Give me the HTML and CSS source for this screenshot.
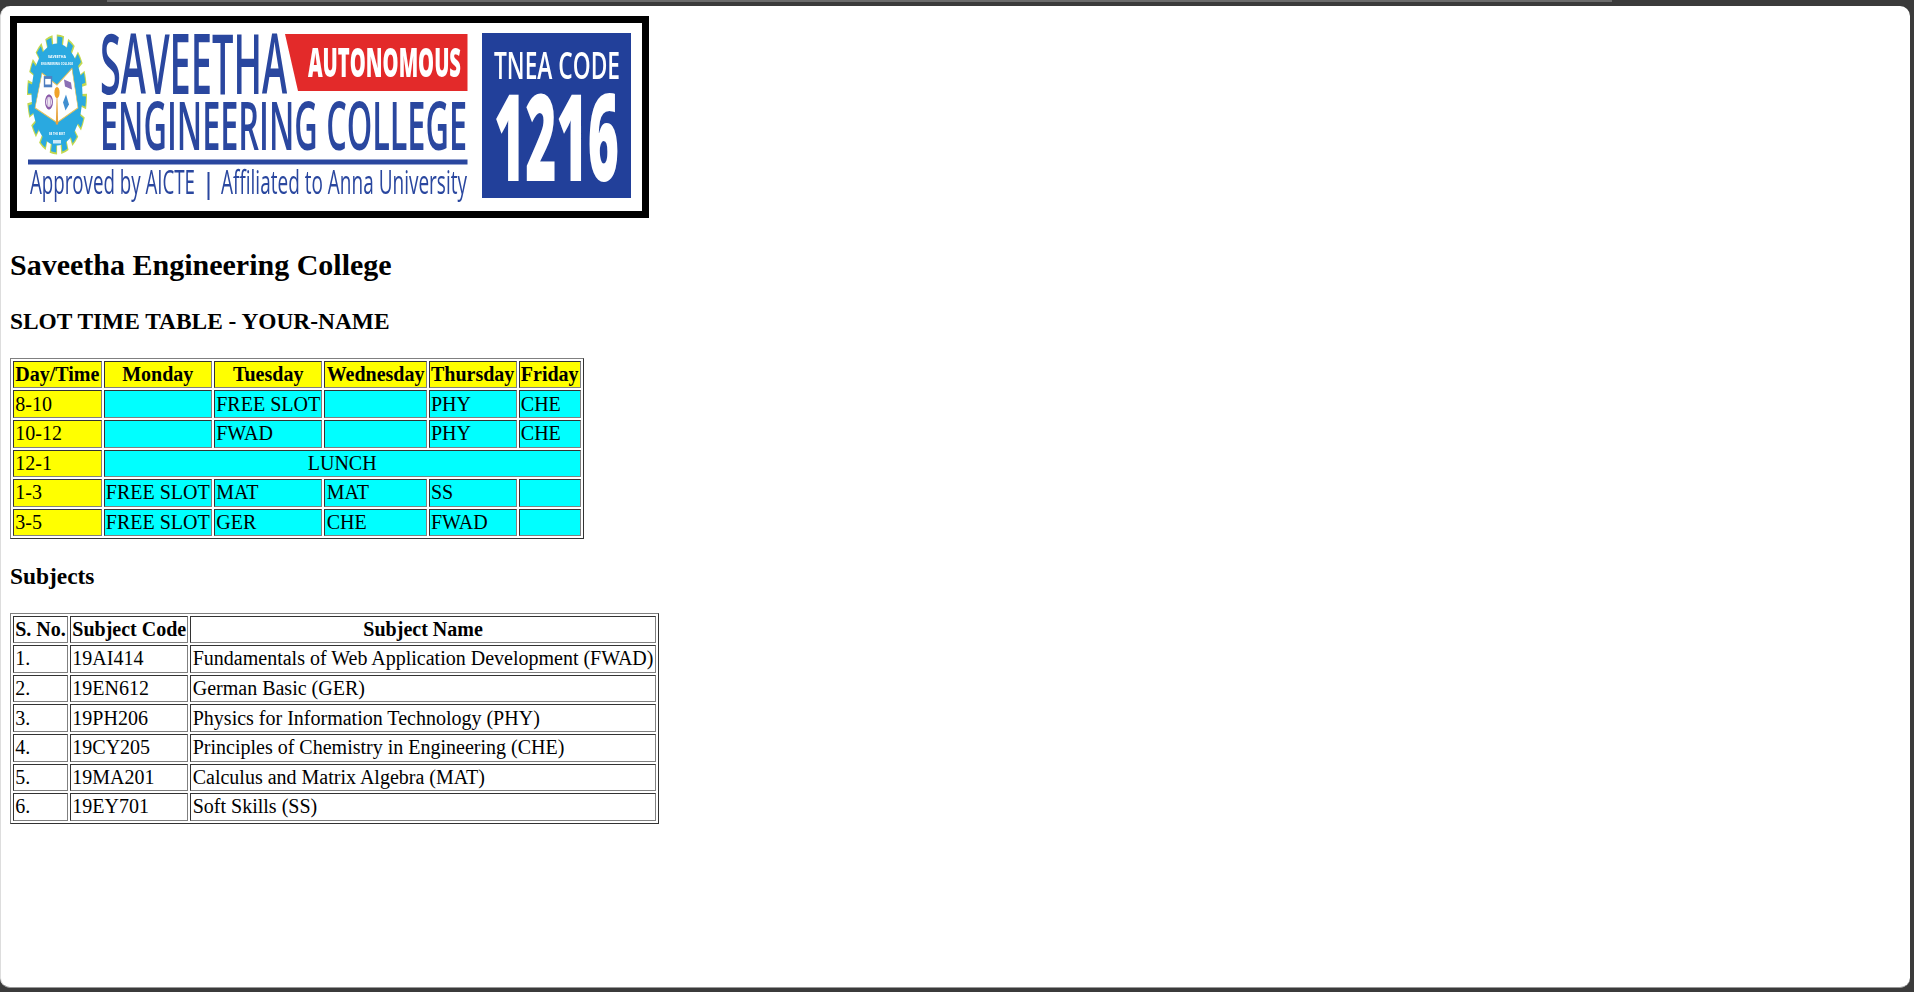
FILE: index.html

```html
<!DOCTYPE html>
<html lang="en">
<head>
  <meta charset="UTF-8">
  <title>Slot Time Table</title>
  <link rel="stylesheet" href="styles.css">
</head>
<body>
  <div class="tab-edge"></div>
  <div class="page">
    <svg class="logo" viewBox="17 23 625 188" preserveAspectRatio="none" role="img" aria-label="Saveetha Engineering College logo">
      <defs>
        <filter id="soft" x="-2%" y="-2%" width="104%" height="104%"><feGaussianBlur stdDeviation="0.5"/></filter>
      </defs>
      <g filter="url(#soft)">
        <!-- gear badge, the whole logo is stretched so it is taller than wide -->
        <g transform="translate(57 94.5) scale(1 2)">
          <circle r="27" pathLength="160" fill="none" stroke="#c3d84f" stroke-width="6" stroke-dasharray="6.4 3.6"/>
          <circle r="26" pathLength="160" fill="none" stroke="#29a9e0" stroke-width="6" stroke-dasharray="4.6 5.4" stroke-dashoffset="-0.9"/>
          <circle r="25.5" fill="#29a9e0"/>
          <path d="M-15 -10.7 L0 -4.7 L15 -13 L21 6.7 L0 14 L-22 6.7 Z" fill="#fff" stroke="#e6c25a" stroke-width=".6"/>
          <rect x="-12.5" y="-8.5" width="7" height="4.2" fill="#fff" stroke="#4f7fc0" stroke-width="1.4"/>
          <ellipse cx="-8" cy="3.7" rx="3.4" ry="3.2" fill="none" stroke="#8a5aa8" stroke-width="1.1"/>
          <ellipse cx="-8" cy="3.7" rx="1.2" ry="3.4" fill="none" stroke="#8a5aa8" stroke-width=".7"/>
          <path d="M7 -7.5 L14 -6 L15 -2.5 L8 -4 Z" fill="#8a6fb5"/>
          <path d="M6 4 L9 0 L12 5 L8.5 8 Z" fill="#3f8fd0"/>
          <path d="M-1.2 15 L0 -5 L1.2 15 Z" fill="#e8a33c"/>
          <ellipse cy="-1" rx="2.6" ry="2.8" fill="#f0a32c"/>
        </g>
        <text class="tiny" x="57" y="57.5" text-anchor="middle" textLength="18" lengthAdjust="spacingAndGlyphs">SAVEETHA</text>
        <text class="tiny" x="57" y="64.5" text-anchor="middle" textLength="32" lengthAdjust="spacingAndGlyphs">ENGINEERING COLLEGE</text>
        <text class="tiny" x="57" y="135" text-anchor="middle" textLength="16" lengthAdjust="spacingAndGlyphs">BE THE BEST</text>
        <rect x="53" y="140" width="8" height="3.5" fill="#cfeaf8"/>

        <polygon points="285,34 467.5,34 467.5,91 298,91" fill="#e32b2b"/>
        <text class="word blue" x="100" y="94" font-size="84" textLength="187" lengthAdjust="spacingAndGlyphs">SAVEETHA</text>
        <text class="word white bold" x="308" y="76.5" font-size="41" textLength="153" lengthAdjust="spacingAndGlyphs">AUTONOMOUS</text>
        <text class="word blue" x="100" y="150" font-size="67" textLength="367" lengthAdjust="spacingAndGlyphs">ENGINEERING COLLEGE</text>
        <rect x="28" y="159.5" width="439.5" height="5" fill="#2a479f"/>
        <text class="word blue thin" x="30" y="194" font-size="33" textLength="165" lengthAdjust="spacingAndGlyphs">Approved by AICTE</text>
        <rect x="207.5" y="172" width="2" height="28" fill="#2a479f"/>
        <text class="word blue thin" x="221" y="194" font-size="33" textLength="246" lengthAdjust="spacingAndGlyphs">Affiliated to Anna University</text>

        <rect x="482" y="33" width="149" height="165" fill="#21409a"/>
        <text class="word white" x="494" y="79" font-size="38" textLength="126" lengthAdjust="spacingAndGlyphs">TNEA CODE</text>
        <text class="word white bold" x="494" y="181" font-size="120" textLength="125" lengthAdjust="spacingAndGlyphs">1216</text>
      </g>
    </svg>

    <h1>Saveetha Engineering College</h1>
    <h2>SLOT TIME TABLE - YOUR-NAME</h2>

    <table class="slots">
      <tr><th>Day/Time</th><th>Monday</th><th>Tuesday</th><th>Wednesday</th><th>Thursday</th><th>Friday</th></tr>
      <tr><td class="time">8-10</td><td></td><td>FREE SLOT</td><td></td><td>PHY</td><td>CHE</td></tr>
      <tr><td class="time">10-12</td><td></td><td>FWAD</td><td></td><td>PHY</td><td>CHE</td></tr>
      <tr><td class="time">12-1</td><td class="lunch" colspan="5">LUNCH</td></tr>
      <tr><td class="time">1-3</td><td>FREE SLOT</td><td>MAT</td><td>MAT</td><td>SS</td><td></td></tr>
      <tr><td class="time">3-5</td><td>FREE SLOT</td><td>GER</td><td>CHE</td><td>FWAD</td><td></td></tr>
    </table>

    <h3>Subjects</h3>

    <table class="subjects">
      <tr><th>S. No.</th><th>Subject Code</th><th>Subject Name</th></tr>
      <tr><td>1.</td><td>19AI414</td><td>Fundamentals of Web Application Development (FWAD)</td></tr>
      <tr><td>2.</td><td>19EN612</td><td>German Basic (GER)</td></tr>
      <tr><td>3.</td><td>19PH206</td><td>Physics for Information Technology (PHY)</td></tr>
      <tr><td>4.</td><td>19CY205</td><td>Principles of Chemistry in Engineering (CHE)</td></tr>
      <tr><td>5.</td><td>19MA201</td><td>Calculus and Matrix Algebra (MAT)</td></tr>
      <tr><td>6.</td><td>19EY701</td><td>Soft Skills (SS)</td></tr>
    </table>
  </div>
</body>
</html>
```

FILE: styles.css

```css
html, body {
  height: 100%;
}
body {
  margin: 0;
  background: #3b3b3b;
  font-family: "Liberation Serif", serif;
  font-size: 20px;
  line-height: 23.1px;
  color: #000;
  box-sizing: border-box;
  padding: 6px 4px 4px 0;
  overflow: hidden;
}
.tab-edge {
  height: 2px;
  margin: -6px 298px 4px 107px;
  background: #6b6b6b;
}
.page {
  height: 982px;
  box-sizing: border-box;
  background: #fff;
  border-radius: 10px;
  border-left: 1px solid #ddd;
  border-bottom: 1px solid #999;
  padding: 10px 9px;
}
.logo {
  display: block;
  width: 625px;
  height: 188px;
  border: 7px solid #000;
}
.tiny {
  font-family: "Open Sans", sans-serif;
  font-size: 4px;
  font-weight: 700;
  fill: #fff;
}
.word {
  font-family: "Open Sans", sans-serif;
  font-weight: 600;
}
.blue { fill: #2a479f; }
.white { fill: #fff; }
.word.thin { font-weight: 400; }
.word.bold { font-weight: 800; }
h1 {
  font-size: 30px;
  line-height: 34.5px;
  margin: 30px 0 25px;
}
h2, h3 {
  font-size: 23.4px;
  line-height: 26.5px;
  margin: 23.4px 0;
}
h2 {
  margin: 22px 0 23.8px;
}
table {
  border: 1px solid;
  border-color: #808080 #333 #333 #808080;
  border-spacing: 2.5px;
}
th, td {
  border: 1px solid;
  border-color: #333 #808080 #808080 #333;
  padding: 1.25px;
}
.slots th, .slots .time {
  background: #ff0;
}
.slots td {
  background: #0ff;
}
.slots .time {
  background: #ff0;
}
.lunch {
  text-align: center;
}
```
